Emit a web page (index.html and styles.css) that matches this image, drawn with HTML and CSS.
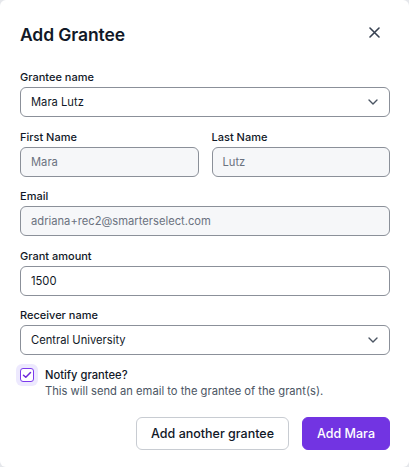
FILE: index.html
```html
<!DOCTYPE html>
<html>
<head>
<meta charset="utf-8">
<link rel="stylesheet" href="styles.css">
</head>
<body>
<div class="modal">
  <div class="header">
    <h1 class="title">Add Grantee</h1>
    <button class="close" aria-label="Close">
      <svg width="11" height="11" viewBox="0 0 11 11"><path d="M1 1L10 10M10 1L1 10" stroke="#374151" stroke-width="1.6" stroke-linecap="round"/></svg>
    </button>
  </div>
  <div class="form">
    <div class="field">
      <label class="label">Grantee name</label>
      <div class="input select">
        <span>Mara Lutz</span>
        <svg class="chev" width="10" height="6" viewBox="0 0 10 6"><path d="M1 1L5 5L9 1" fill="none" stroke="#4b5563" stroke-width="1.4" stroke-linecap="round" stroke-linejoin="round"/></svg>
      </div>
    </div>
    <div class="row">
      <div class="field">
        <label class="label">First Name</label>
        <div class="input disabled">Mara</div>
      </div>
      <div class="field">
        <label class="label">Last Name</label>
        <div class="input disabled">Lutz</div>
      </div>
    </div>
    <div class="field">
      <label class="label">Email</label>
      <div class="input disabled">adriana+rec2@smarterselect.com</div>
    </div>
    <div class="field">
      <label class="label">Grant amount</label>
      <div class="input">1500</div>
    </div>
    <div class="field">
      <label class="label">Receiver name</label>
      <div class="input select">
        <span>Central University</span>
        <svg class="chev" width="10" height="6" viewBox="0 0 10 6"><path d="M1 1L5 5L9 1" fill="none" stroke="#4b5563" stroke-width="1.4" stroke-linecap="round" stroke-linejoin="round"/></svg>
      </div>
    </div>
  </div>
  <div class="notify">
    <div class="checkwrap">
      <div class="checkbox">
        <svg width="10" height="8" viewBox="0 0 10 8"><path d="M1.5 4.2L3.8 6.3L8.5 1.5" fill="none" stroke="#6d28d9" stroke-width="1.5" stroke-linecap="round" stroke-linejoin="round"/></svg>
      </div>
    </div>
    <div class="notify-text">
      <div class="notify-title">Notify grantee?</div>
      <div class="notify-desc">This will send an email to the grantee of the grant(s).</div>
    </div>
  </div>
  <div class="actions">
    <button class="btn outline">Add another grantee</button>
    <button class="btn primary">Add Mara</button>
  </div>
</div>
</body>
</html>
```
FILE: styles.css
```css
* { box-sizing: border-box; }
html, body { margin: 0; padding: 0; }
body {
  background: #e5e7eb;
  font-family: Inter, "Noto Sans", sans-serif;
  color: #111827;
  width: 409px;
  height: 467px;
  overflow: hidden;
}
.modal {
  width: 409px;
  height: 467px;
  background: #fff;
  border-radius: 6px;
  padding: 22px 19px 0 20px;
}
.header {
  display: flex;
  align-items: center;
  justify-content: space-between;
  height: 26px;
}
.title {
  margin: 0;
  font-size: 17.5px;
  font-weight: 600;
  line-height: 26px;
  color: #111827;
  letter-spacing: -0.1px;
}
.close {
  border: 0;
  background: none;
  padding: 0;
  width: 11px;
  height: 11px;
  margin-right: 10px;
  margin-top: -5px;
  display: flex;
}
.form {
  margin-top: 21px;
  display: flex;
  flex-direction: column;
  gap: 11.5px;
}
.row {
  display: flex;
  gap: 13px;
}
.row .field { flex: 1; }
.field {
  display: flex;
  flex-direction: column;
}
.label {
  font-size: 11px;
  line-height: 16px;
  font-weight: 500;
  color: #111827;
  margin-bottom: 2px;
}
.input {
  height: 30px;
  border: 1px solid #8b9099;
  border-radius: 6px;
  padding: 0 10px;
  display: flex;
  align-items: center;
  font-size: 11.2px;
  color: #111827;
  background: #fff;
}
.input.disabled {
  background: #f6f7f9;
  color: #6b7280;
}
.select { justify-content: space-between; }
.chev { margin-right: 1px; }
.notify {
  display: flex;
  margin-top: 9px;
  gap: 7px;
}
.checkwrap {
  width: 22px;
  height: 22px;
  margin-left: -4px;
  border-radius: 6px;
  background: #ede9fe;
  display: flex;
  align-items: center;
  justify-content: center;
}
.checkbox {
  width: 14px;
  height: 14px;
  border: 1px solid #7c3aed;
  border-radius: 3px;
  background: #fff;
  display: flex;
  align-items: center;
  justify-content: center;
}
.notify-text { padding-top: 3px; }
.notify-title {
  font-size: 11.2px;
  line-height: 16px;
  font-weight: 500;
  color: #111827;
}
.notify-desc {
  font-size: 11.2px;
  line-height: 16px;
  color: #4b5563;
}
.actions {
  display: flex;
  justify-content: flex-end;
  gap: 13px;
  margin-top: 18px;
}
.btn {
  height: 33px;
  border-radius: 6px;
  font-family: Inter, "Noto Sans", sans-serif;
  font-size: 12.5px;
  font-weight: 500;
  padding: 0 14px;
}
.outline {
  background: #fff;
  border: 1px solid #c8ccd2;
  color: #111827;
}
.primary {
  background: #7234e2;
  border: 1px solid #7234e2;
  color: #fff;
}
```
